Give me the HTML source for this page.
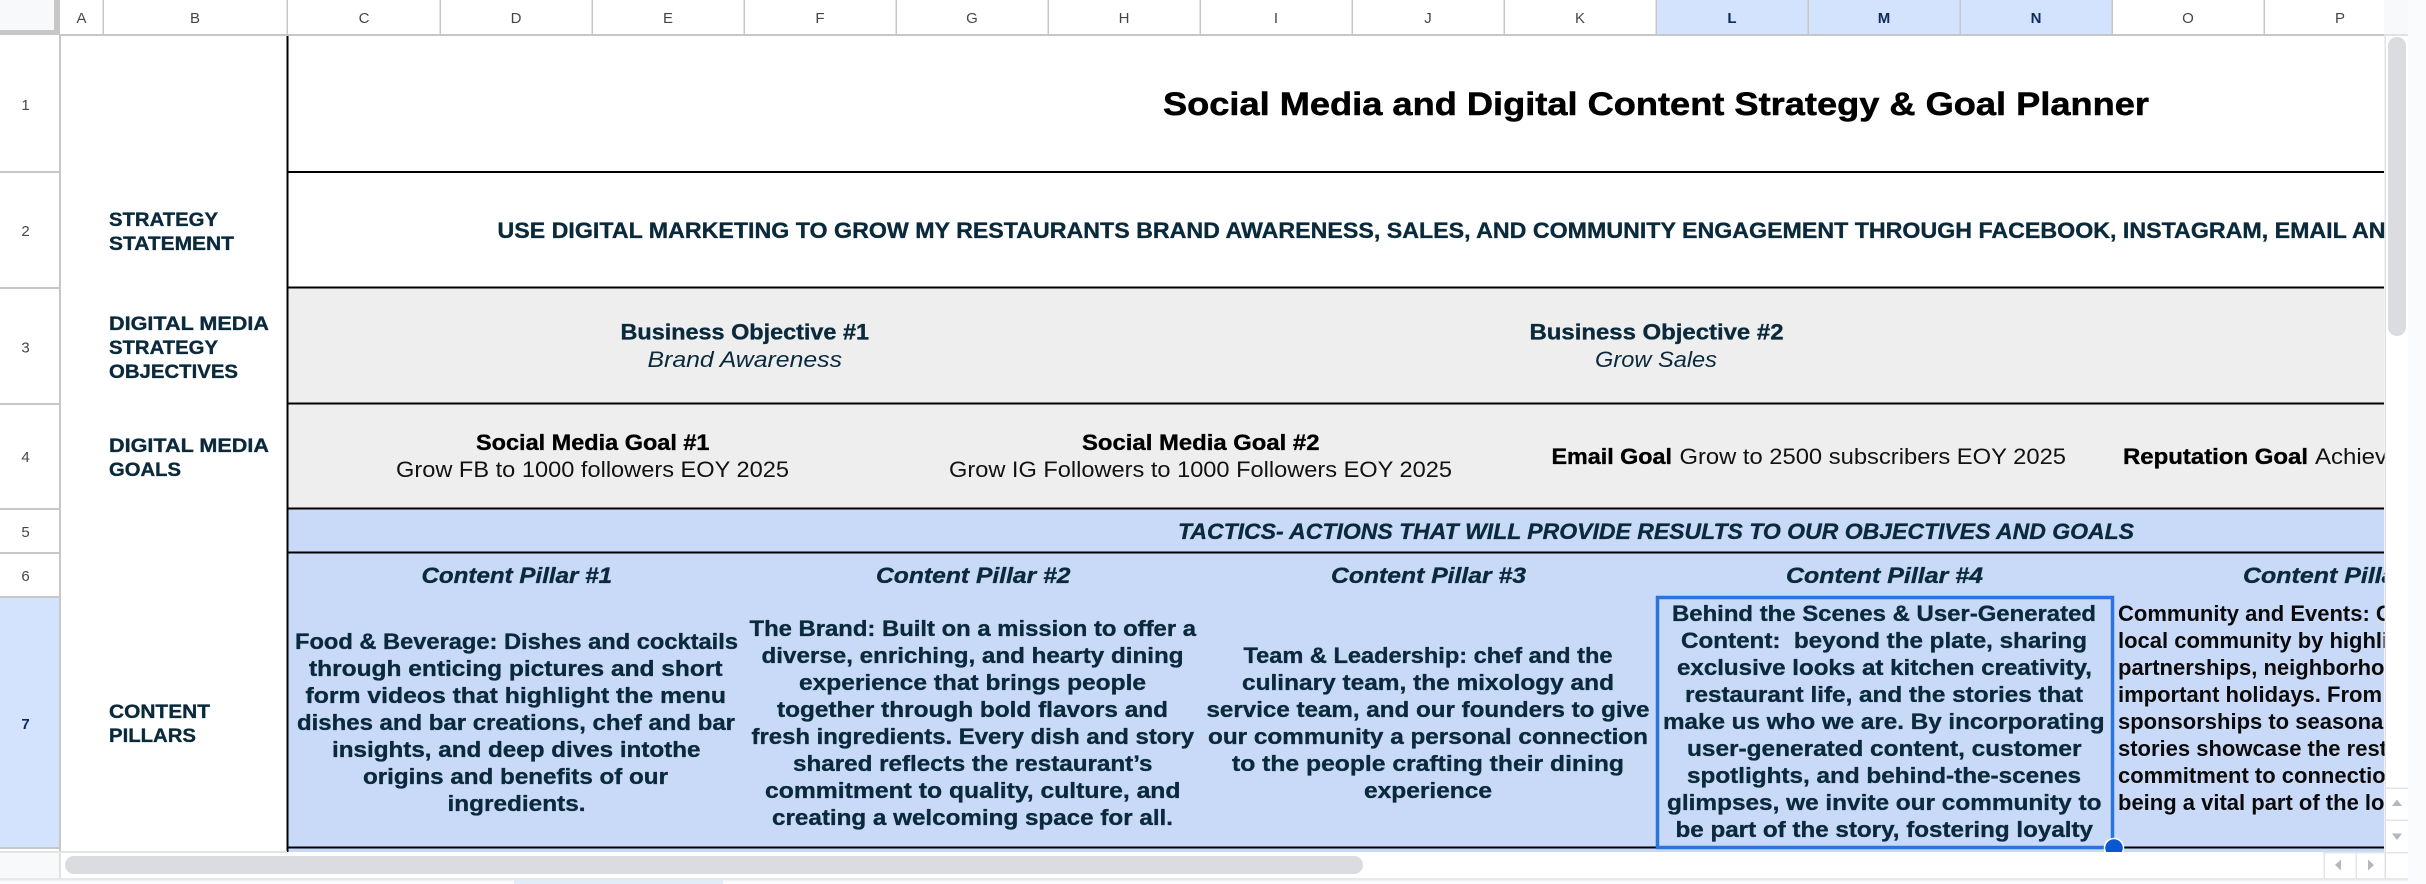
<!DOCTYPE html>
<html lang="en">
<head>
<meta charset="utf-8">
<title>Social Media and Digital Content Strategy &amp; Goal Planner</title>
<style>
html,body{margin:0;padding:0;width:2426px;height:884px;overflow:hidden;background:#f9fbfd}
svg{display:block}
text{font-family:"Liberation Sans",Arial,sans-serif;white-space:pre}
.h{font-size:15px;fill:#444746;text-anchor:middle}
.hs{font-size:15px;fill:#0b2a5e;text-anchor:middle;font-weight:700}
.lab{font-size:19.5px;font-weight:700;fill:#0a2a3c;stroke:#0a2a3c;stroke-width:.35px}
.b{font-size:22px;font-weight:700;fill:#0a2a3c;stroke:#0a2a3c;stroke-width:.35px}
.bk{font-size:22px;font-weight:700;fill:#000;stroke:#000;stroke-width:.35px}
.bi{font-size:22px;font-weight:700;font-style:italic;fill:#0a2a3c;stroke:#0a2a3c;stroke-width:.35px}
.l{font-size:22px;fill:#111}
.li{font-size:22px;font-style:italic;fill:#0a2a3c}
.ar{font-size:22px;font-weight:700;fill:#0a0a0a}
</style>
</head>
<body>
<svg xmlns="http://www.w3.org/2000/svg" width="2426" height="884" viewBox="0 0 2426 884">
<defs><clipPath id="c"><rect x="0" y="0" width="2384.5" height="884"/></clipPath></defs>

<rect x="0" y="0" width="2426" height="884" fill="#f9fbfd"/>
<rect x="0" y="0" width="2408" height="878" fill="#fff"/>

<!-- corner -->
<rect x="0" y="0" width="54" height="30" fill="#f8f9fa"/>
<rect x="54" y="0" width="6" height="35" fill="#c7c7c7"/>
<rect x="0" y="30" width="60" height="5" fill="#c7c7c7"/>

<!-- selected headers -->
<rect x="1656" y="0" width="456" height="34" fill="#d3e3fd"/>
<rect x="0" y="598" width="59" height="249" fill="#d3e3fd"/>

<!-- cell fills -->
<rect x="287" y="288" width="2097" height="115" fill="#eeeeee"/>
<rect x="287" y="404" width="2097" height="104" fill="#eeeeee"/>
<rect x="287" y="509" width="2097" height="343" fill="#c9daf8"/>

<!-- header lines -->
<rect x="60" y="34" width="2325" height="2" fill="#c7c7c7"/>
<g fill="#c7c7c7">
<rect x="102.500" y="0" width="1.500" height="34"/>
<rect x="286.500" y="0" width="1.500" height="34"/>
<rect x="439.500" y="0" width="1.500" height="34"/>
<rect x="591.500" y="0" width="1.500" height="34"/>
<rect x="743.500" y="0" width="1.500" height="34"/>
<rect x="895.500" y="0" width="1.500" height="34"/>
<rect x="1047.500" y="0" width="1.500" height="34"/>
<rect x="1199.500" y="0" width="1.500" height="34"/>
<rect x="1351.500" y="0" width="1.500" height="34"/>
<rect x="1503.500" y="0" width="1.500" height="34"/>
<rect x="1655.500" y="0" width="1.500" height="34"/>
<rect x="1807.500" y="0" width="1.500" height="34"/>
<rect x="1959.500" y="0" width="1.500" height="34"/>
<rect x="2111.500" y="0" width="1.500" height="34"/>
<rect x="2263.500" y="0" width="1.500" height="34"/>
<rect x="59" y="35" width="2" height="817"/>
<rect x="0" y="171" width="59" height="2"/>
<rect x="0" y="287" width="59" height="2"/>
<rect x="0" y="403" width="59" height="2"/>
<rect x="0" y="508" width="59" height="2"/>
<rect x="0" y="552" width="59" height="2"/>
<rect x="0" y="596" width="59" height="2"/>
<rect x="0" y="847" width="59" height="2"/>
</g>

<!-- column letters -->
<text class="h" x="81.500" y="23">A</text>
<text class="h" x="195" y="23">B</text>
<text class="h" x="364" y="23">C</text>
<text class="h" x="516" y="23">D</text>
<text class="h" x="668" y="23">E</text>
<text class="h" x="820" y="23">F</text>
<text class="h" x="972" y="23">G</text>
<text class="h" x="1124" y="23">H</text>
<text class="h" x="1276" y="23">I</text>
<text class="h" x="1428" y="23">J</text>
<text class="h" x="1580" y="23">K</text>
<text class="hs" x="1732" y="23">L</text>
<text class="hs" x="1884" y="23">M</text>
<text class="hs" x="2036" y="23">N</text>
<text class="h" x="2188" y="23">O</text>
<text class="h" x="2340" y="23">P</text>

<!-- row numbers -->
<text class="h" x="25.500" y="110">1</text>
<text class="h" x="25.500" y="236">2</text>
<text class="h" x="25.500" y="352.500">3</text>
<text class="h" x="25.500" y="462">4</text>
<text class="h" x="25.500" y="537">5</text>
<text class="h" x="25.500" y="581">6</text>
<text class="hs" x="25.500" y="729">7</text>

<!-- black grid lines -->
<g fill="#000">
<rect x="286.500" y="36" width="2" height="816"/>
<rect x="287" y="171" width="2097" height="2"/>
<rect x="287" y="286.500" width="2097" height="2"/>
<rect x="287" y="402.500" width="2097" height="2"/>
<rect x="287" y="507.500" width="2097" height="2"/>
<rect x="287" y="551.500" width="2097" height="2"/>
<rect x="287" y="846.500" width="2097" height="2"/>
</g>

<g clip-path="url(#c)">
<!-- labels -->
<text class="lab" x="109" y="226" textLength="109" lengthAdjust="spacingAndGlyphs">STRATEGY</text>
<text class="lab" x="109" y="250" textLength="125" lengthAdjust="spacingAndGlyphs">STATEMENT</text>
<text class="lab" x="109" y="330" textLength="160" lengthAdjust="spacingAndGlyphs">DIGITAL MEDIA</text>
<text class="lab" x="109" y="354" textLength="109" lengthAdjust="spacingAndGlyphs">STRATEGY</text>
<text class="lab" x="109" y="378" textLength="129" lengthAdjust="spacingAndGlyphs">OBJECTIVES</text>
<text class="lab" x="109" y="452" textLength="160" lengthAdjust="spacingAndGlyphs">DIGITAL MEDIA</text>
<text class="lab" x="109" y="476" textLength="72" lengthAdjust="spacingAndGlyphs">GOALS</text>
<text class="lab" x="109" y="718" textLength="101" lengthAdjust="spacingAndGlyphs">CONTENT</text>
<text class="lab" x="109" y="742" textLength="87" lengthAdjust="spacingAndGlyphs">PILLARS</text>

<!-- title -->
<text x="1163" y="115" textLength="986" lengthAdjust="spacingAndGlyphs" style="font-size:32px;font-weight:700;fill:#000;stroke:#000;stroke-width:.5px">Social Media and Digital Content Strategy &amp; Goal Planner</text>

<!-- statement -->
<text class="b" x="497.500" y="238" textLength="1888" lengthAdjust="spacingAndGlyphs">USE DIGITAL MARKETING TO GROW MY RESTAURANTS BRAND AWARENESS, SALES, AND COMMUNITY ENGAGEMENT THROUGH FACEBOOK, INSTAGRAM, EMAIL AN</text>

<!-- objectives -->
<text class="b" x="620.500" y="339.500" textLength="248.500" lengthAdjust="spacingAndGlyphs">Business Objective #1</text>
<text class="li" x="647.500" y="367" textLength="194.500" lengthAdjust="spacingAndGlyphs">Brand Awareness</text>
<text class="b" x="1529.500" y="339.500" textLength="254" lengthAdjust="spacingAndGlyphs">Business Objective #2</text>
<text class="li" x="1595" y="367" textLength="122" lengthAdjust="spacingAndGlyphs">Grow Sales</text>

<!-- goals -->
<text class="bk" x="476" y="450" textLength="233.500" lengthAdjust="spacingAndGlyphs">Social Media Goal #1</text>
<text class="l" x="396" y="477" textLength="393" lengthAdjust="spacingAndGlyphs">Grow FB to 1000 followers EOY 2025</text>
<text class="bk" x="1082" y="450" textLength="237.500" lengthAdjust="spacingAndGlyphs">Social Media Goal #2</text>
<text class="l" x="949" y="477" textLength="503" lengthAdjust="spacingAndGlyphs">Grow IG Followers to 1000 Followers EOY 2025</text>
<text class="bk" x="1551.500" y="464" textLength="120.500" lengthAdjust="spacingAndGlyphs">Email Goal</text>
<text class="l" x="1679.500" y="464" textLength="386.500" lengthAdjust="spacingAndGlyphs">Grow to 2500 subscribers EOY 2025</text>
<text class="bk" x="2123" y="464" textLength="185" lengthAdjust="spacingAndGlyphs">Reputation Goal</text>
<text class="l" x="2315" y="464" textLength="72" lengthAdjust="spacingAndGlyphs">Achiev</text>

<!-- tactics -->
<text class="bi" x="1178" y="539" textLength="956" lengthAdjust="spacingAndGlyphs">TACTICS- ACTIONS THAT WILL PROVIDE RESULTS TO OUR OBJECTIVES AND GOALS</text>

<!-- pillar headers -->
<text class="bi" x="421.500" y="583" textLength="190.500" lengthAdjust="spacingAndGlyphs">Content Pillar #1</text>
<text class="bi" x="876" y="583" textLength="194.500" lengthAdjust="spacingAndGlyphs">Content Pillar #2</text>
<text class="bi" x="1331" y="583" textLength="195" lengthAdjust="spacingAndGlyphs">Content Pillar #3</text>
<text class="bi" x="1786" y="583" textLength="197" lengthAdjust="spacingAndGlyphs">Content Pillar #4</text>
<text class="bi" x="2243" y="583" textLength="197" lengthAdjust="spacingAndGlyphs">Content Pillar #5</text>

<!-- pillar 1 -->
<text class="b" x="295" y="649" textLength="443" lengthAdjust="spacingAndGlyphs">Food &amp; Beverage: Dishes and cocktails</text>
<text class="b" x="309" y="676" textLength="413.500" lengthAdjust="spacingAndGlyphs">through enticing pictures and short</text>
<text class="b" x="305.500" y="703" textLength="420.500" lengthAdjust="spacingAndGlyphs">form videos that highlight the menu</text>
<text class="b" x="297" y="730" textLength="438" lengthAdjust="spacingAndGlyphs">dishes and bar creations, chef and bar</text>
<text class="b" x="332" y="757" textLength="368.500" lengthAdjust="spacingAndGlyphs">insights, and deep dives intothe</text>
<text class="b" x="363" y="784" textLength="305" lengthAdjust="spacingAndGlyphs">origins and benefits of our</text>
<text class="b" x="447.500" y="811" textLength="138" lengthAdjust="spacingAndGlyphs">ingredients.</text>

<!-- pillar 2 -->
<text class="b" x="749.500" y="636" textLength="446.500" lengthAdjust="spacingAndGlyphs">The Brand: Built on a mission to offer a</text>
<text class="b" x="761.500" y="663" textLength="422" lengthAdjust="spacingAndGlyphs">diverse, enriching, and hearty dining</text>
<text class="b" x="799" y="690" textLength="347" lengthAdjust="spacingAndGlyphs">experience that brings people</text>
<text class="b" x="777" y="717" textLength="391" lengthAdjust="spacingAndGlyphs">together through bold flavors and</text>
<text class="b" x="751.500" y="744" textLength="442.500" lengthAdjust="spacingAndGlyphs">fresh ingredients. Every dish and story</text>
<text class="b" x="793" y="771" textLength="359.500" lengthAdjust="spacingAndGlyphs">shared reflects the restaurant’s</text>
<text class="b" x="765" y="798" textLength="415.500" lengthAdjust="spacingAndGlyphs">commitment to quality, culture, and</text>
<text class="b" x="772" y="825" textLength="401" lengthAdjust="spacingAndGlyphs">creating a welcoming space for all.</text>

<!-- pillar 3 -->
<text class="b" x="1243.500" y="663" textLength="369" lengthAdjust="spacingAndGlyphs">Team &amp; Leadership: chef and the</text>
<text class="b" x="1242" y="690" textLength="372" lengthAdjust="spacingAndGlyphs">culinary team, the mixology and</text>
<text class="b" x="1206.500" y="717" textLength="443" lengthAdjust="spacingAndGlyphs">service team, and our founders to give</text>
<text class="b" x="1208" y="744" textLength="440" lengthAdjust="spacingAndGlyphs">our community a personal connection</text>
<text class="b" x="1232" y="771" textLength="392" lengthAdjust="spacingAndGlyphs">to the people crafting their dining</text>
<text class="b" x="1364" y="798" textLength="128" lengthAdjust="spacingAndGlyphs">experience</text>

<!-- pillar 4 -->
<text class="b" x="1672" y="621" textLength="424" lengthAdjust="spacingAndGlyphs">Behind the Scenes &amp; User-Generated</text>
<text class="b" x="1681" y="648" textLength="406" lengthAdjust="spacingAndGlyphs">Content:  beyond the plate, sharing</text>
<text class="b" x="1677" y="675" textLength="415" lengthAdjust="spacingAndGlyphs">exclusive looks at kitchen creativity,</text>
<text class="b" x="1685" y="702" textLength="398" lengthAdjust="spacingAndGlyphs">restaurant life, and the stories that</text>
<text class="b" x="1663" y="729" textLength="441.500" lengthAdjust="spacingAndGlyphs">make us who we are. By incorporating</text>
<text class="b" x="1687" y="756" textLength="394.500" lengthAdjust="spacingAndGlyphs">user-generated content, customer</text>
<text class="b" x="1687" y="783" textLength="394" lengthAdjust="spacingAndGlyphs">spotlights, and behind-the-scenes</text>
<text class="b" x="1667" y="810" textLength="434.500" lengthAdjust="spacingAndGlyphs">glimpses, we invite our community to</text>
<text class="b" x="1675.500" y="837" textLength="417.500" lengthAdjust="spacingAndGlyphs">be part of the story, fostering loyalty</text>

<!-- pillar 5 -->
<text class="ar" x="2118" y="621">Community and Events: C</text>
<text class="ar" x="2118" y="648">local community by highlighting</text>
<text class="ar" x="2118" y="675">partnerships, neighborhood</text>
<text class="ar" x="2118" y="702">important holidays. From</text>
<text class="ar" x="2118" y="729">sponsorships to seasonal</text>
<text class="ar" x="2118" y="756">stories showcase the restaurant</text>
<text class="ar" x="2118" y="783">commitment to connection</text>
<text class="ar" x="2118" y="810">being a vital part of the local</text>
</g>

<!-- selection -->
<rect x="1657.500" y="597.500" width="455" height="250" fill="none" stroke="#2a74dc" stroke-width="3.500"/>

<!-- bottom scrollbar region -->
<rect x="0" y="852" width="2385" height="26" fill="#fff"/>
<rect x="0" y="852" width="59" height="26" fill="#f8f9fa"/>
<rect x="59" y="852" width="2" height="26" fill="#dfe1e5"/>
<rect x="0" y="851" width="287" height="2" fill="#e3e3e3"/>
<rect x="65" y="856" width="1298" height="18" rx="9" fill="#dadce0"/>

<!-- handle -->
<svg x="2100" y="835" width="28" height="17" viewBox="0 0 28 17">
<circle cx="14" cy="13" r="9.500" fill="#0b57d0" stroke="#fff" stroke-width="1.500"/>
</svg>

<!-- vertical scrollbar region -->
<rect x="2385" y="0" width="23" height="878" fill="#fff"/>
<rect x="2384" y="0" width="24" height="34" fill="#f8f9fa"/>
<rect x="2384" y="34" width="24" height="2" fill="#dfe1e5"/>
<rect x="2384.500" y="36" width="1.500" height="842" fill="#dfe1e5"/>
<rect x="2388" y="37" width="18" height="299" rx="9" fill="#dadce0"/>
<rect x="2385" y="787.500" width="23" height="1.500" fill="#e3e5e8"/>
<rect x="2385" y="819.500" width="23" height="1.500" fill="#e3e5e8"/>
<rect x="2323" y="852" width="85" height="1.500" fill="#e3e5e8"/>
<rect x="2323.500" y="852" width="1.500" height="26" fill="#e3e5e8"/>
<rect x="2355.500" y="852" width="1.500" height="26" fill="#e3e5e8"/>
<path d="M2397 799.500l5 6.500h-10z" fill="#b4b7bb"/>
<path d="M2392 833.500h10l-5 6.500z" fill="#b4b7bb"/>
<path d="M2335 865l6-5.500v11z" fill="#b4b7bb"/>
<path d="M2374 865l-6-5.500v11z" fill="#b4b7bb"/>

<!-- bottom strip -->
<rect x="0" y="878" width="2408" height="2.500" fill="#e6e8eb"/>
<rect x="0" y="880.500" width="2426" height="3.500" fill="#f9fbfd"/>
<rect x="514" y="880.500" width="209" height="3.500" fill="#e1ebfa"/>
<rect x="2408" y="0" width="18" height="884" fill="#f9fbfd"/>
</svg>
</body>
</html>
